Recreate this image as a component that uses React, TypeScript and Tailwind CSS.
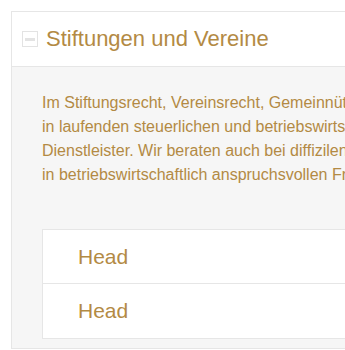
import React from "react";

const lines = [
  "Im Stiftungsrecht, Vereinsrecht, Gemeinnützigkeitsrecht und Spendenrecht",
  "in laufenden steuerlichen und betriebswirtschaftlichen Fragen sind wir Ihr",
  "Dienstleister. Wir beraten auch bei diffizilen Gestaltungen und unterstützen",
  "in betriebswirtschaftlich anspruchsvollen Fragestellungen.",
];

function MinusBox() {
  return (
    <span className="flex h-4 w-4 shrink-0 items-center justify-center border border-[#e3e3e3] bg-white">
      <span className="h-[3px] w-[10px] bg-[#e3e3e3]" />
    </span>
  );
}

export default function App() {
  return (
    <div
      className="h-[350px] w-[345px] overflow-hidden bg-white pl-[11px] pt-[11px]"
      style={{ fontFamily: '"Liberation Sans", Arial, sans-serif' }}
    >
      <div className="w-[420px] border border-[#e6e6e6]">
        <div className="flex h-[55px] items-center gap-2 border-b border-[#e6e6e6] bg-white pl-[10px]">
          <MinusBox />
          <h2 className="text-[22px] leading-none text-[#b38a44]">Stiftungen und Vereine</h2>
        </div>
        <div className="bg-[#f6f6f6] pb-[9px] pl-[30px] pt-[24px]">
          <p className="text-[16px] leading-[24px] text-[#b38a44]">
            {lines.map((l) => (
              <span key={l} className="block whitespace-nowrap">
                {l}
              </span>
            ))}
          </p>
          <div className="mt-[42px] border border-[#e6e6e6] bg-white">
            <div className="flex h-[54px] items-center border-b border-[#e6e6e6] pl-[35px] text-[21px] text-[#b38a44]">
              Head
            </div>
            <div className="flex h-[54px] items-center pl-[35px] text-[21px] text-[#b38a44]">Head</div>
          </div>
        </div>
      </div>
    </div>
  );
}
